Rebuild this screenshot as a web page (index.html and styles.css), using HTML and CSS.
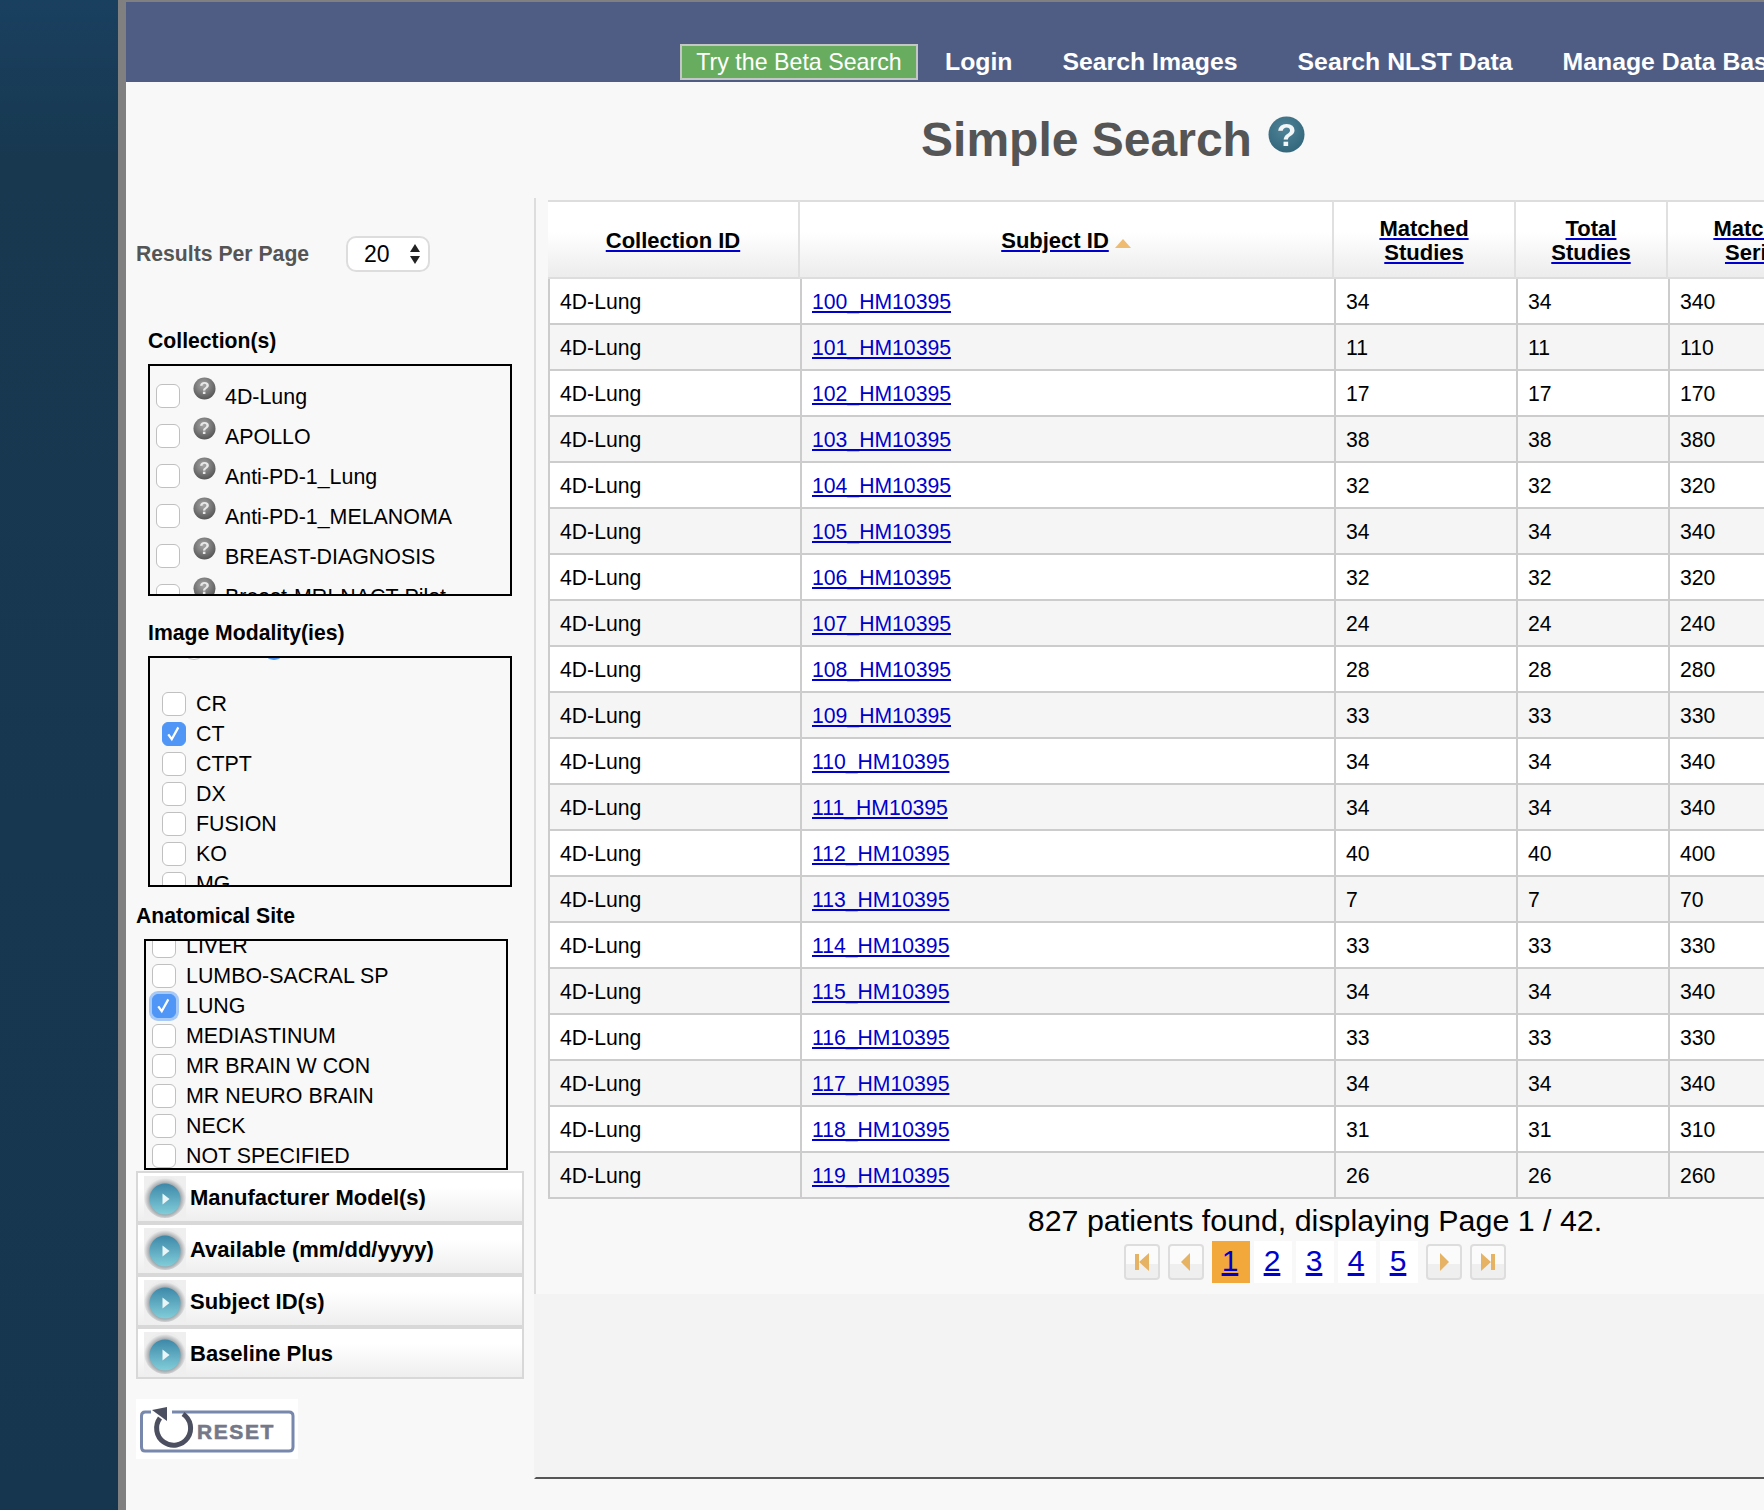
FILE: index.html
```html
<!DOCTYPE html>
<html lang="en">
<head>
    <meta charset="UTF-8">
    <meta name="viewport" content="width=device-width, initial-scale=1.0">
    <title>Simple Search</title>
    <link rel="stylesheet" href="styles.css">
</head>
<body>

<!-- shared icons -->
<svg class="icon-defs" xmlns="http://www.w3.org/2000/svg">
    <defs>
        <radialGradient id="grayBall" cx="45%" cy="35%" r="70%">
            <stop offset="0" stop-color="#a8a8a8"/>
            <stop offset="1" stop-color="#4f4f4f"/>
        </radialGradient>
        <radialGradient id="tealBall" cx="45%" cy="35%" r="75%">
            <stop offset="0" stop-color="#4f8398"/>
            <stop offset="1" stop-color="#2f6377"/>
        </radialGradient>
        <linearGradient id="playBall" x1="0" y1="0" x2="0" y2="1">
            <stop offset="0" stop-color="#3d88a8"/>
            <stop offset="1" stop-color="#82cdd9"/>
        </linearGradient>
        <radialGradient id="playHalo" cx="50%" cy="55%" r="50%">
            <stop offset="0.7" stop-color="#989da1"/>
            <stop offset="1" stop-color="#ececec"/>
        </radialGradient>
        <symbol id="help-gray" viewBox="0 0 24 24">
            <circle cx="12" cy="12" r="11.5" fill="url(#grayBall)"/>
            <text x="12" y="18" text-anchor="middle" class="help-mark" fill="#e8e8e8">?</text>
        </symbol>
        <symbol id="play-ball" viewBox="0 0 42 42">
            <rect width="42" height="42" fill="#efefef"/>
            <circle cx="21" cy="21" r="21" fill="url(#playHalo)"/>
            <circle cx="21" cy="23" r="15.5" fill="url(#playBall)"/>
            <path d="M18.500 17.500 L25.500 23 L18.500 28.500 Z" fill="#eaf5f8"/>
        </symbol>
    </defs>
</svg>

<div class="left-band"></div>

<div class="main">
    <div class="top-bar">
        <nav class="nav">
            <a class="beta-btn" href="#">Try the Beta Search</a>
            <a class="nav-link" href="#">Login</a>
            <a class="nav-link" href="#">Search Images</a>
            <a class="nav-link" href="#">Search NLST Data</a>
            <a class="nav-link" href="#">Manage Data Basket</a>
        </nav>
    </div>

    <div class="title-row">
        <h1>Simple Search</h1>
        <svg class="title-help" viewBox="0 0 37 37">
            <circle cx="18.5" cy="18.5" r="18" fill="url(#tealBall)"/>
            <text x="18.5" y="30" text-anchor="middle" class="title-mark" fill="#f2f6f7">?</text>
        </svg>
    </div>

    <div class="columns">
        <aside class="sidebar">
            <div class="per-page">
                <span class="per-page-label">Results Per Page</span>
                <div class="per-page-select">
                    <span>20</span>
                    <svg width="10" height="22" viewBox="0 0 10 22"><path d="M5 1 L10 9 H0 Z M5 21 L10 13 H0 Z" fill="#222"/></svg>
                </div>
            </div>

            <h3 class="filter-title collection-title">Collection(s)</h3>
            <div class="filter-box collection-box">
                <div class="coll-row"><span class="check"></span><svg class="help"><use href="#help-gray"/></svg><span>4D-Lung</span></div>
                <div class="coll-row"><span class="check"></span><svg class="help"><use href="#help-gray"/></svg><span>APOLLO</span></div>
                <div class="coll-row"><span class="check"></span><svg class="help"><use href="#help-gray"/></svg><span>Anti-PD-1_Lung</span></div>
                <div class="coll-row"><span class="check"></span><svg class="help"><use href="#help-gray"/></svg><span>Anti-PD-1_MELANOMA</span></div>
                <div class="coll-row"><span class="check"></span><svg class="help"><use href="#help-gray"/></svg><span>BREAST-DIAGNOSIS</span></div>
                <div class="coll-row"><span class="check"></span><svg class="help"><use href="#help-gray"/></svg><span>Breast-MRI-NACT-Pilot</span></div>
            </div>

            <h3 class="filter-title modality-title">Image Modality(ies)</h3>
            <div class="filter-box modality-box">
                <div class="radio-row">
                    <span class="radio"></span>
                    <span class="radio radio-on"></span>
                </div>
                <div class="opt-row"><span class="check"></span>CR</div>
                <div class="opt-row"><span class="check check-on"><svg viewBox="0 0 24 24"><path d="M6 13 L10 18.500 L17.500 5" /></svg></span>CT</div>
                <div class="opt-row"><span class="check"></span>CTPT</div>
                <div class="opt-row"><span class="check"></span>DX</div>
                <div class="opt-row"><span class="check"></span>FUSION</div>
                <div class="opt-row"><span class="check"></span>KO</div>
                <div class="opt-row"><span class="check"></span>MG</div>
            </div>

            <h3 class="filter-title site-title">Anatomical Site</h3>
            <div class="filter-box site-box">
                <div class="opt-row"><span class="check"></span>LIVER</div>
                <div class="opt-row"><span class="check"></span>LUMBO-SACRAL SP</div>
                <div class="opt-row"><span class="check check-on check-focus"><svg viewBox="0 0 24 24"><path d="M6 13 L10 18.500 L17.500 5" /></svg></span>LUNG</div>
                <div class="opt-row"><span class="check"></span>MEDIASTINUM</div>
                <div class="opt-row"><span class="check"></span>MR BRAIN W CON</div>
                <div class="opt-row"><span class="check"></span>MR NEURO BRAIN</div>
                <div class="opt-row"><span class="check"></span>NECK</div>
                <div class="opt-row"><span class="check"></span>NOT SPECIFIED</div>
            </div>

            <div class="accordion">
                <div class="acc-item"><svg class="acc-icon"><use href="#play-ball"/></svg><span class="acc-label">Manufacturer Model(s)</span></div>
                <div class="acc-item"><svg class="acc-icon"><use href="#play-ball"/></svg><span class="acc-label">Available (mm/dd/yyyy)</span></div>
                <div class="acc-item"><svg class="acc-icon"><use href="#play-ball"/></svg><span class="acc-label">Subject ID(s)</span></div>
                <div class="acc-item"><svg class="acc-icon"><use href="#play-ball"/></svg><span class="acc-label">Baseline Plus</span></div>
            </div>

            <svg class="reset-btn" viewBox="0 0 162 60">
                <rect width="162" height="60" fill="#fff"/>
                <path d="M15 13 H9 Q5.500 13 5.500 17 V48 Q5.500 52 9 52 H153 Q157 52 157 48 V17 Q157 13 153 13 H36" fill="none" stroke="#7788ac" stroke-width="3"/>
                <path d="M47 15 A17 17 0 1 1 24 19" fill="none" stroke="#4c4f60" stroke-width="5"/>
                <path d="M16 11 L31 8 L31 22 Z" fill="#4c4f60"/>
                <text x="61" y="40" class="reset-text">RESET</text>
            </svg>
        </aside>

        <div class="results-col">
            <div class="results">
                <table class="results-table">
                    <colgroup>
                        <col class="col-collection">
                        <col class="col-subject">
                        <col class="col-matched">
                        <col class="col-total">
                        <col class="col-series">
                    </colgroup>
                    <thead>
                        <tr>
                            <th><a href="#">Collection ID</a></th>
                            <th><a href="#">Subject ID</a><svg class="sort-caret" viewBox="0 0 16 9"><path d="M8 0 L16 9 H0 Z" fill="#eebb70"/></svg></th>
                            <th><a href="#">Matched<br>Studies</a></th>
                            <th><a href="#">Total<br>Studies</a></th>
                            <th><a href="#">Matched<br>Series</a></th>
                        </tr>
                    </thead>
                    <tbody>
                        <tr><td>4D-Lung</td><td><a href="#">100_HM10395</a></td><td>34</td><td>34</td><td>340</td></tr>
                        <tr><td>4D-Lung</td><td><a href="#">101_HM10395</a></td><td>11</td><td>11</td><td>110</td></tr>
                        <tr><td>4D-Lung</td><td><a href="#">102_HM10395</a></td><td>17</td><td>17</td><td>170</td></tr>
                        <tr><td>4D-Lung</td><td><a href="#">103_HM10395</a></td><td>38</td><td>38</td><td>380</td></tr>
                        <tr><td>4D-Lung</td><td><a href="#">104_HM10395</a></td><td>32</td><td>32</td><td>320</td></tr>
                        <tr><td>4D-Lung</td><td><a href="#">105_HM10395</a></td><td>34</td><td>34</td><td>340</td></tr>
                        <tr><td>4D-Lung</td><td><a href="#">106_HM10395</a></td><td>32</td><td>32</td><td>320</td></tr>
                        <tr><td>4D-Lung</td><td><a href="#">107_HM10395</a></td><td>24</td><td>24</td><td>240</td></tr>
                        <tr><td>4D-Lung</td><td><a href="#">108_HM10395</a></td><td>28</td><td>28</td><td>280</td></tr>
                        <tr><td>4D-Lung</td><td><a href="#">109_HM10395</a></td><td>33</td><td>33</td><td>330</td></tr>
                        <tr><td>4D-Lung</td><td><a href="#">110_HM10395</a></td><td>34</td><td>34</td><td>340</td></tr>
                        <tr><td>4D-Lung</td><td><a href="#">111_HM10395</a></td><td>34</td><td>34</td><td>340</td></tr>
                        <tr><td>4D-Lung</td><td><a href="#">112_HM10395</a></td><td>40</td><td>40</td><td>400</td></tr>
                        <tr><td>4D-Lung</td><td><a href="#">113_HM10395</a></td><td>7</td><td>7</td><td>70</td></tr>
                        <tr><td>4D-Lung</td><td><a href="#">114_HM10395</a></td><td>33</td><td>33</td><td>330</td></tr>
                        <tr><td>4D-Lung</td><td><a href="#">115_HM10395</a></td><td>34</td><td>34</td><td>340</td></tr>
                        <tr><td>4D-Lung</td><td><a href="#">116_HM10395</a></td><td>33</td><td>33</td><td>330</td></tr>
                        <tr><td>4D-Lung</td><td><a href="#">117_HM10395</a></td><td>34</td><td>34</td><td>340</td></tr>
                        <tr><td>4D-Lung</td><td><a href="#">118_HM10395</a></td><td>31</td><td>31</td><td>310</td></tr>
                        <tr><td>4D-Lung</td><td><a href="#">119_HM10395</a></td><td>26</td><td>26</td><td>260</td></tr>
                    </tbody>
                </table>
                <div class="summary">827 patients found, displaying Page 1 / 42.</div>
                <div class="pager">
                    <span class="pager-btn"><svg viewBox="0 0 32 32"><path d="M9 8 H13 V24 H9 Z M23 7 V25 L13 16 Z" fill="#e6b264"/></svg></span>
                    <span class="pager-btn"><svg viewBox="0 0 32 32"><path d="M20 7 V25 L11 16 Z" fill="#e6b264"/></svg></span>
                    <a class="page-num page-current" href="#">1</a>
                    <a class="page-num" href="#">2</a>
                    <a class="page-num" href="#">3</a>
                    <a class="page-num" href="#">4</a>
                    <a class="page-num" href="#">5</a>
                    <span class="pager-btn pager-next"><svg viewBox="0 0 32 32"><path d="M12 7 V25 L21 16 Z" fill="#e6b264"/></svg></span>
                    <span class="pager-btn"><svg viewBox="0 0 32 32"><path d="M9 7 V25 L19 16 Z M19 8 H23 V24 H19 Z" fill="#e6b264"/></svg></span>
                </div>
            </div>
            <div class="results-filler"></div>
        </div>
    </div>
</div>

</body>
</html>
```

FILE: styles.css
```css
html, body {
    margin: 0;
    height: 1510px;
    overflow: hidden;
}

body {
    display: flex;
    width: 1764px;
    font-family: "Liberation Sans", Arial, sans-serif;
    color: #000;
    background: #f8f8f8;
}

.icon-defs {
    display: block;
    width: 0;
    height: 0;
    flex: none;
}

.help-mark {
    font-family: "Liberation Sans", Arial, sans-serif;
    font-size: 18px;
    font-weight: bold;
}

.title-mark {
    font-family: "Liberation Sans", Arial, sans-serif;
    font-size: 32px;
    font-weight: bold;
}

.left-band {
    flex: none;
    width: 118px;
    background: linear-gradient(to bottom, #1a4060, #17384f 160px, #163650);
    border-right: 8px solid #808080;
}

.main {
    flex: none;
    width: 1974px;
    border-top: 2px solid #808080;
}

/* top bar */
.top-bar {
    height: 80px;
    background-color: #4f5d84;
    box-sizing: border-box;
    padding: 42px 0 0 554px;
}

.nav {
    display: flex;
    align-items: center;
    height: 36px;
}

.beta-btn {
    box-sizing: border-box;
    width: 238px;
    height: 36px;
    line-height: 32px;
    text-align: center;
    background-color: #68ad5f;
    border: 2px solid #c4c8c4;
    color: #fff;
    font-size: 23.2px;
    text-decoration: none;
}

.nav-link {
    margin-left: 50px;
    color: #fff;
    font-size: 24.8px;
    font-weight: bold;
    text-decoration: none;
    white-space: nowrap;
}

.beta-btn + .nav-link {
    margin-left: 27px;
}

.nav-link:nth-child(4) {
    margin-left: 60px;
}

/* title */
.title-row {
    display: flex;
    justify-content: center;
    align-items: center;
    height: 116px;
    column-gap: 16px;
}

.title-row h1 {
    margin: 0;
    font-size: 48px;
    line-height: 60px;
    color: #555;
}

.title-help {
    width: 37px;
    height: 37px;
    margin-bottom: 11px;
    filter: blur(0.5px);
}

.columns {
    display: flex;
}

/* sidebar */
.sidebar {
    flex: none;
    width: 408px;
}

.per-page {
    display: flex;
    align-items: center;
    height: 36px;
    margin: 38px 0 0 10px;
}

.per-page-label {
    width: 210px;
    font-size: 21.2px;
    font-weight: bold;
    color: #555;
}

.per-page-select {
    display: flex;
    justify-content: space-between;
    align-items: center;
    box-sizing: border-box;
    width: 84px;
    height: 36px;
    padding: 0 8px 0 16px;
    font-size: 23px;
    background: #fff;
    border: 2px solid #ddd;
    border-radius: 10px;
}

.filter-title {
    margin: 0;
    font-size: 21.2px;
    line-height: 24px;
    font-weight: bold;
}

.collection-title {
    margin: 57px 0 11px 22px;
}

.modality-title {
    margin: 25px 0 11px 22px;
}

.site-title {
    margin: 17px 0 11px 10px;
}

.filter-box {
    box-sizing: border-box;
    width: 364px;
    border: 2px solid #000;
    overflow: hidden;
    font-size: 21.4px;
}

.collection-box {
    height: 232px;
    margin-left: 22px;
    padding: 10px 0 0 6px;
}

.modality-box {
    height: 231px;
    margin-left: 22px;
    padding-left: 12px;
}

.site-box {
    height: 231px;
    margin-left: 18px;
    padding-left: 6px;
}

.check {
    flex: none;
    display: block;
    box-sizing: border-box;
    width: 24px;
    height: 24px;
    background: #fff;
    border: 1.5px solid #c0c0c0;
    border-radius: 6px;
}

.check-on {
    background: #4f96f6;
    border-color: #4f96f6;
}

.check-on svg {
    display: block;
    width: 21px;
    height: 21px;
    fill: none;
    stroke: #fff;
    stroke-width: 2.600;
}

.check-focus {
    box-shadow: 0 0 0 3px #a6c9f7;
}

.coll-row {
    display: flex;
    align-items: flex-start;
    height: 40px;
    line-height: 42px;
    white-space: nowrap;
}

.coll-row .check {
    margin-top: 8px;
}

.help {
    flex: none;
    width: 23px;
    height: 23px;
    margin: 1px 9px 0 13px;
    filter: blur(0.6px);
}

.radio-row {
    display: flex;
    height: 24px;
    margin: -22px 0 29px 20px;
}

.radio {
    box-sizing: border-box;
    width: 24px;
    height: 24px;
    margin-right: 56px;
    background: #fff;
    border: 1.5px solid #c0c0c0;
    border-radius: 50%;
}

.radio-on {
    background: #4f96f6;
    border-color: #4f96f6;
}

.opt-row {
    display: flex;
    align-items: center;
    column-gap: 10px;
    height: 30px;
    white-space: nowrap;
}

.site-box .opt-row:first-child {
    margin-top: -10px;
}

/* collapsed filters */
.accordion {
    width: 388px;
    margin: 1px 0 0 10px;
}

.acc-item {
    display: flex;
    align-items: center;
    box-sizing: border-box;
    height: 52px;
    padding-left: 6px;
    font-size: 22px;
    font-weight: bold;
    background: linear-gradient(to bottom, #fff 30%, #eee);
    border: 2px solid #d8d8d8;
}

.acc-icon {
    flex: none;
    width: 42px;
    height: 42px;
    margin-right: 4px;
}

.acc-label {
    padding-top: 2px;
}

.reset-btn {
    display: block;
    width: 162px;
    height: 60px;
    margin: 20px 0 0 10px;
}

.reset-text {
    font-family: "Liberation Sans", Arial, sans-serif;
    font-size: 21px;
    font-weight: bold;
    letter-spacing: 1.600px;
    fill: #757888;
    stroke: #757888;
    stroke-width: 0.6;
}

/* results */
.results-col {
    flex: none;
    width: 1566px;
}

.results {
    height: 1096px;
    box-sizing: border-box;
    padding: 2px 0 0 12px;
    border-left: 2px solid #ddd;
}

.results-table {
    width: 1302px;
    table-layout: fixed;
    border-collapse: separate;
    border-spacing: 0;
    background: #fff;
}

.col-collection { width: 252px; }
.col-subject { width: 534px; }
.col-matched { width: 182px; }
.col-total { width: 152px; }
.col-series { width: 182px; }

.results-table th {
    box-sizing: border-box;
    height: 79px;
    padding-top: 4px;
    font-size: 22px;
    line-height: 24px;
    background: linear-gradient(to bottom, #fff 40%, #ececec);
    border-top: 2px solid #ddd;
    border-bottom: 2px solid #ddd;
    border-right: 2px solid #e0e0e0;
}

.results-table th a {
    color: #000;
    text-decoration: underline #0000cc;
}

.sort-caret {
    width: 16px;
    height: 9px;
    margin-left: 6px;
}

.results-table td {
    box-sizing: border-box;
    height: 46px;
    padding: 2px 0 0 10px;
    font-size: 21.2px;
    border-left: 2px solid #ccc;
    border-bottom: 2px solid #ccc;
}

.results-table tbody tr:nth-child(even) td {
    background: #f5f5f5;
}

.results-table td a {
    color: #0000cc;
}

.summary {
    width: 1534px;
    margin: 1px 0;
    line-height: 40px;
    text-align: center;
    font-size: 30.4px;
}

.pager {
    display: flex;
    align-items: center;
    justify-content: center;
    column-gap: 4px;
    box-sizing: border-box;
    width: 1534px;
    height: 42px;
    padding-left: 4px;
}

.pager-btn {
    box-sizing: border-box;
    width: 36px;
    height: 36px;
    margin-right: 4px;
    background: linear-gradient(to bottom, #fbfbfb 55%, #efefef 55%);
    border: 2px solid #ddd;
    border-radius: 4px;
}

.pager-btn svg {
    display: block;
    width: 32px;
    height: 32px;
}

.pager-next {
    margin-left: 4px;
}

.page-num {
    width: 38px;
    height: 42px;
    padding-right: 2px;
    box-sizing: border-box;
    line-height: 40px;
    text-align: center;
    font-size: 30px;
    background: #fff;
    color: #0000cc;
}

.page-current {
    background: #f3a83c;
}

.results-filler {
    height: 183px;
    background: #f3f3f3;
    border-left: 2px solid transparent;
    border-bottom: 2px solid #555;
}
```
